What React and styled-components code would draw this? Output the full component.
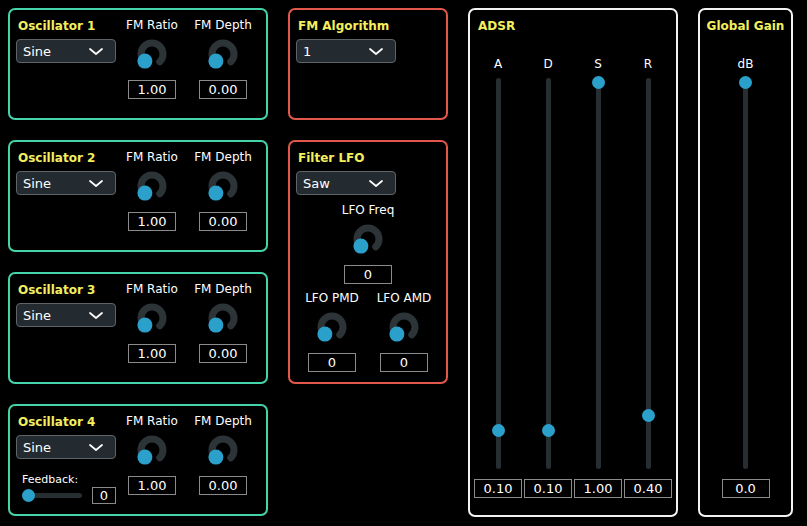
import React from 'react';
import styled, { createGlobalStyle } from 'styled-components';

const GlobalStyle = createGlobalStyle`
  body {
    margin: 0;
    background: #000;
    color: #fff;
    font-family: "DejaVu Sans", "Liberation Sans", sans-serif;
  }
`;

const TEAL = '#45d3a9';
const RED = '#e2574b';
const WHITE = '#f2f2f2';
const YELLOW = '#f3ef5e';
const BLUE = '#2ba0cb';
const DARK = '#272e32';

const Page = styled.div`
    display: flex;
    align-items: flex-start;
    gap: 20px;
    padding: 8px;
`;

const Column = styled.div`
    display: flex;
    flex-direction: column;
    gap: 20px;
    width: ${props => props.width}px;
`;

const Panel = styled.div`
    box-sizing: border-box;
    width: ${props => props.width}px;
    height: ${props => props.height}px;
    border: 2px solid ${props => props.border};
    border-radius: 7px;
    padding: 8px ${props => props.narrow ? 2 : 6}px 0;
`;

const Title = styled.div`
    font-size: 12px;
    font-weight: bold;
    line-height: 14px;
    white-space: nowrap;
    margin: 1px 0 0 ${props => props.center ? 0 : 2}px;
    color: ${YELLOW};
    text-align: ${props => props.center ? 'center' : 'left'};
`;

const OscGrid = styled.div`
    display: grid;
    grid-template-columns: 100px 72px 70px;
`;

const LeftCol = styled.div`
    display: flex;
    flex-direction: column;
`;

const SelectBox = styled.div`
    box-sizing: border-box;
    width: 100px;
    height: 24px;
    margin-top: 6px;
    display: flex;
    align-items: center;
    justify-content: space-between;
    padding: 0 12px 0 6px;
    background: #232b30;
    border: 1px solid #5e6468;
    border-radius: 4px;
    font-size: 13px;
    svg { display: block; }
`;

const Control = styled.div`
    display: flex;
    flex-direction: column;
    align-items: center;
    margin-top: ${props => props.top || 0}px;
`;

const Label = styled.div`
    font-size: 12px;
    line-height: 14px;
    white-space: nowrap;
`;

const KnobSvg = styled.svg`
    display: block;
    margin-top: 5px;
`;

const ValueBox = styled.div`
    box-sizing: border-box;
    width: ${props => props.width || 48}px;
    height: ${props => props.height || 19}px;
    margin-top: ${props => props.top ?? 9}px;
    border: 1px solid #8b8b8b;
    font-size: 13px;
    line-height: ${props => (props.height || 19) - 2}px;
    text-align: center;
`;

const FeedbackLabel = styled.div`
    font-size: 11px;
    line-height: 14px;
    margin: 14px 0 0 6px;
`;

const FeedbackRow = styled.div`
    display: flex;
    align-items: center;
    height: 16px;
    padding-left: 6px;
    gap: 10px;
`;

const HTrack = styled.div`
    position: relative;
    width: 60px;
    height: 5px;
    border-radius: 3px;
    background: ${DARK};
`;

const HThumb = styled.div`
    position: absolute;
    top: -4px;
    width: 13px;
    height: 13px;
    border-radius: 50%;
    background: ${BLUE};
`;

const PairGrid = styled.div`
    display: grid;
    grid-template-columns: 72px 72px;
    margin-top: 7px;
`;

const FaderGrid = styled.div`
    display: grid;
    grid-template-columns: repeat(${props => props.cols}, 50px);
    justify-content: ${props => props.center ? 'center' : 'start'};
    margin: 24px 0 0 ${props => props.center ? 0 : -3}px;
`;

const VTrack = styled.div`
    position: relative;
    width: 5px;
    height: 391px;
    margin-top: 7px;
    border-radius: 3px;
    background: ${DARK};
`;

const VThumb = styled.div`
    position: absolute;
    left: -4px;
    width: 13px;
    height: 13px;
    margin-top: -6.5px;
    border-radius: 50%;
    background: ${BLUE};
`;

const Select = ({ value }) => (
    <SelectBox>
        <span>{value}</span>
        <svg width="14" height="7" viewBox="0 0 14 7">
            <polyline points="1,1 7,6 13,1" fill="none" stroke="#fff" strokeWidth="1.7" strokeLinecap="round" strokeLinejoin="round" />
        </svg>
    </SelectBox>
);

const Knob = () => (
    <KnobSvg width="34" height="34" viewBox="0 0 34 34">
        <path d="M 9.22 24.78 A 11 11 0 1 1 24.78 24.78" fill="none" stroke="#2d3438" strokeWidth="7" strokeLinecap="round" />
        <circle cx="9.9" cy="24.1" r="7.5" fill={BLUE} />
    </KnobSvg>
);

const KnobControl = ({ label, value, top }) => (
    <Control top={top}>
        <Label>{label}</Label>
        <Knob />
        <ValueBox>{value}</ValueBox>
    </Control>
);

const Fader = ({ label, value, pos }) => (
    <Control>
        <Label>{label}</Label>
        <VTrack>
            <VThumb style={{ top: 4 + (1 - pos) * 383 }} />
        </VTrack>
        <ValueBox top={10}>{value}</ValueBox>
    </Control>
);

const Oscillator = ({ n, feedback }) => (
    <Panel border={TEAL} width={260} height={112}>
        <OscGrid>
            <LeftCol>
                <Title>Oscillator {n}</Title>
                <Select value="Sine" />
                {feedback && (
                    <>
                        <FeedbackLabel>Feedback:</FeedbackLabel>
                        <FeedbackRow>
                            <HTrack><HThumb style={{ left: 0 }} /></HTrack>
                            <ValueBox width={24} height={17} top={0}>0</ValueBox>
                        </FeedbackRow>
                    </>
                )}
            </LeftCol>
            <KnobControl label="FM Ratio" value="1.00" />
            <KnobControl label="FM Depth" value="0.00" />
        </OscGrid>
    </Panel>
);

const adsr = [
    { label: 'A', value: '0.10', pos: 0.09 },
    { label: 'D', value: '0.10', pos: 0.09 },
    { label: 'S', value: '1.00', pos: 1 },
    { label: 'R', value: '0.40', pos: 0.13 },
];

const App = () => (
    <>
        <GlobalStyle />
        <Page>
            <Column width={260}>
                <Oscillator n={1} />
                <Oscillator n={2} />
                <Oscillator n={3} />
                <Oscillator n={4} feedback />
            </Column>
            <Column width={160}>
                <Panel border={RED} width={160} height={112}>
                    <Title>FM Algorithm</Title>
                    <Select value="1" />
                </Panel>
                <Panel border={RED} width={160} height={244}>
                    <Title>Filter LFO</Title>
                    <Select value="Saw" />
                    <KnobControl label="LFO Freq" value="0" top={8} />
                    <PairGrid>
                        <KnobControl label="LFO PMD" value="0" />
                        <KnobControl label="LFO AMD" value="0" />
                    </PairGrid>
                </Panel>
            </Column>
            <Panel border={WHITE} width={210} height={509}>
                <Title>ADSR</Title>
                <FaderGrid cols={4}>
                    {adsr.map(f => <Fader key={f.label} {...f} />)}
                </FaderGrid>
            </Panel>
            <Panel border={WHITE} width={95} height={509} narrow>
                <Title center>Global Gain</Title>
                <FaderGrid cols={1} center>
                    <Fader label="dB" value="0.0" pos={1} />
                </FaderGrid>
            </Panel>
        </Page>
    </>
);

export default App;
